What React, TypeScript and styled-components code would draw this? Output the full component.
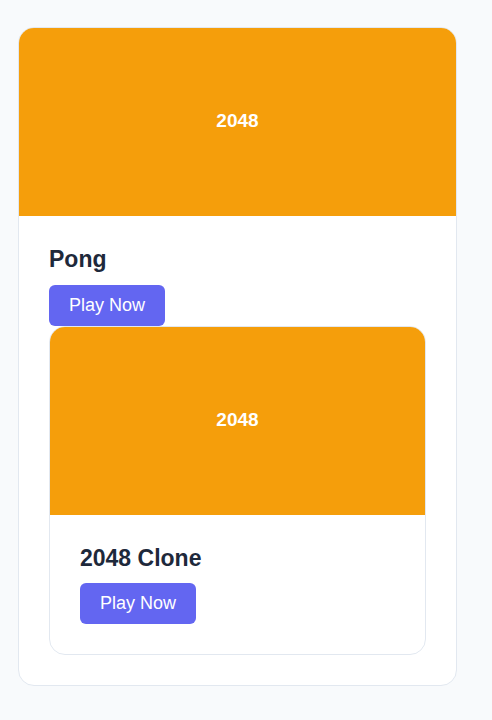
import React from "react";
import styled, { createGlobalStyle } from "styled-components";

const Global = createGlobalStyle`
  html, body { margin: 0; padding: 0; background: #f8fafc; }
  body { font-family: "Liberation Sans", Arial, sans-serif; }
  * { box-sizing: border-box; }
`;

const Page = styled.div`
  padding: 27px 0 27px 18px;
`;

const Card = styled.div<{ $nested?: boolean }>`
  width: ${(p) => (p.$nested ? "100%" : "439px")};
  background: #ffffff;
  border: 1px solid #e2e8f0;
  border-radius: 16px;
  overflow: hidden;
  display: flex;
  flex-direction: column;
`;

const Cover = styled.div`
  height: 188px;
  padding-bottom: 2px;
  background: #f59e0b;
  display: flex;
  align-items: center;
  justify-content: center;
  color: #ffffff;
  font-size: 19px;
  font-weight: 700;
`;

const Body = styled.div`
  padding: 30px;
  display: flex;
  flex-direction: column;
  align-items: flex-start;
`;

const Title = styled.h3`
  margin: 0 0 11px;
  font-size: 23px;
  line-height: 1.2;
  font-weight: 700;
  color: #1e293b;
`;

const PlayButton = styled.button`
  border: none;
  background: #6366f1;
  color: #ffffff;
  font-family: "Liberation Sans", Arial, sans-serif;
  font-size: 18px;
  line-height: 21px;
  padding: 10px 20px;
  border-radius: 6px;
  cursor: pointer;
`;

const GameCard: React.FC<{ title: string; nested?: boolean; children?: React.ReactNode }> = ({
  title,
  nested,
  children,
}) => (
  <Card $nested={nested}>
    <Cover>2048</Cover>
    <Body>
      <Title>{title}</Title>
      <PlayButton>Play Now</PlayButton>
      {children}
    </Body>
  </Card>
);

export default function App() {
  return (
    <>
      <Global />
      <Page>
        <GameCard title="Pong">
          <GameCard title="2048 Clone" nested />
        </GameCard>
      </Page>
    </>
  );
}
